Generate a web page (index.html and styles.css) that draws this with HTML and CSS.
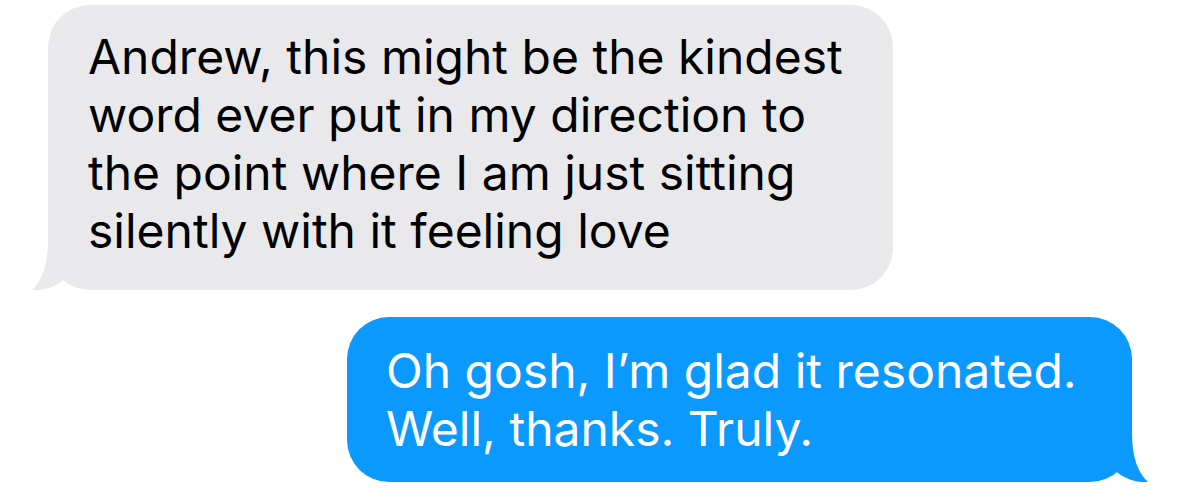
FILE: index.html
```html
<!DOCTYPE html>
<html>
<head>
<meta charset="utf-8">
<link rel="stylesheet" href="styles.css">
</head>
<body>
<div class="thread">
  <div class="bubble received">
    <p class="text">Andrew, this might be the kindest<br>word ever put in my direction to<br>the point where I am just sitting<br>silently with it feeling love</p>
    <svg class="tail tail-left" width="60" height="50" viewBox="0 0 60 50"><path d="M16 0 C16 24 10 40 0 49 C13 50 24 45 33 38 L60 38 L60 0 Z"/></svg>
  </div>
  <div class="bubble sent">
    <p class="text">Oh gosh, I’m glad it resonated.<br>Well, thanks. Truly.</p>
    <svg class="tail tail-right" width="60" height="50" viewBox="0 0 60 50"><path d="M44 0 C44 24 50 40 60 49 C47 50 36 45 27 38 L0 38 L0 0 Z"/></svg>
  </div>
</div>
</body>
</html>
```
FILE: styles.css
```css
html, body {
  margin: 0;
  padding: 0;
  background: #ffffff;
}
.thread {
  display: flex;
  flex-direction: column;
  padding-top: 5px;
  gap: 27px;
  font-family: Inter, "Noto Sans", sans-serif;
}
.bubble {
  position: relative;
  border-radius: 42px;
  box-sizing: border-box;
}
.text {
  margin: 0;
  font-size: 48px;
  line-height: 58px;
  position: relative;
  z-index: 1;
}
.received {
  align-self: flex-start;
  margin-left: 48px;
  width: 845px;
  height: 285px;
  padding: 23px 0 0 40px;
  background: #e9e9eb;
  color: #000;
}
.sent {
  align-self: flex-end;
  margin-right: 47px;
  width: 785px;
  height: 165px;
  padding: 25px 0 0 39px;
  background: #0b99fe;
  color: #fff;
}
.tail {
  position: absolute;
  bottom: -1px;
}
.tail-left {
  left: -16px;
  fill: #e9e9eb;
}
.tail-right {
  right: -16px;
  fill: #0b99fe;
}
```
